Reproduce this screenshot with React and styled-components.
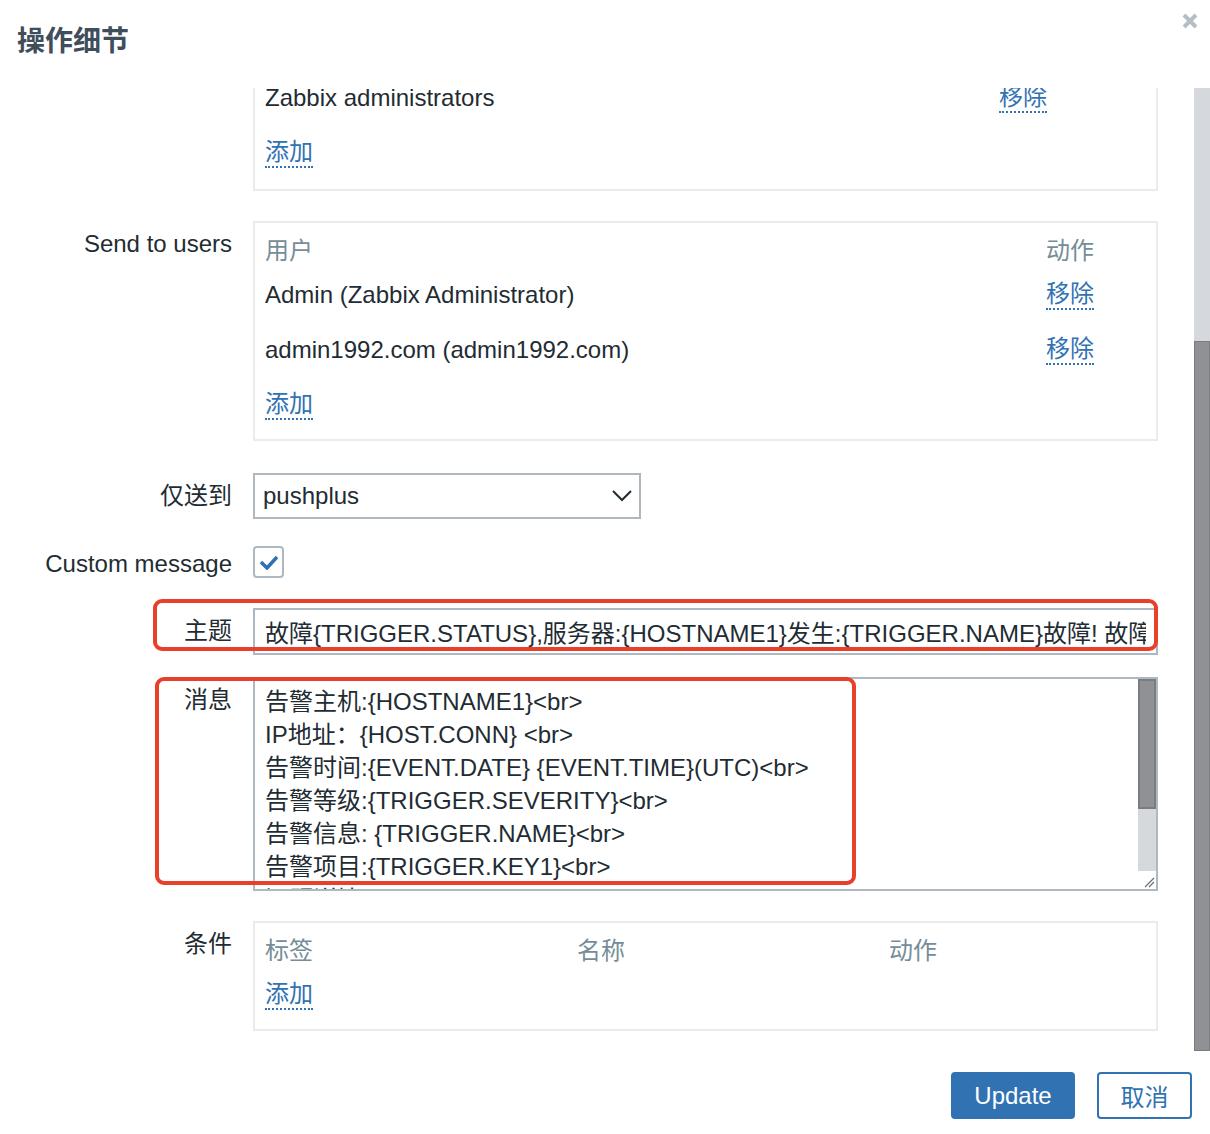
import React, { useLayoutEffect, useRef, useState } from 'react';
import styled, { createGlobalStyle } from 'styled-components';

const FONT = `"Liberation Sans", "Noto Sans CJK SC", sans-serif`;
const TEXT = '#1f2c33';
const BLUE = '#3172b2';
const FIELD_BORDER = '#aeb8c0';

const GlobalStyle = createGlobalStyle`
  html, body {
    margin: 0;
    padding: 0;
    background: #fff;
  }
  body {
    font-family: ${FONT};
    color: ${TEXT};
  }
  * {
    box-sizing: border-box;
  }
`;

const Dialog = styled.div`
  height: 100vh;
  display: flex;
  flex-direction: column;
  background: #fff;
`;

const Header = styled.div`
  flex: none;
  height: 88px;
  display: flex;
  justify-content: space-between;
  align-items: flex-start;
  padding: 0 12px 0 17px;
`;

const Title = styled.h4`
  margin: 24px 0 0;
  font-size: 28px;
  line-height: 36px;
  font-weight: 700;
  color: #404e5b;
`;

const CloseBtn = styled.button`
  margin-top: 13px;
  padding: 0;
  border: none;
  background: none;
  width: 16px;
  height: 16px;
  cursor: pointer;
  svg {
    display: block;
  }
`;

const Body = styled.div`
  flex: 1;
  min-height: 0;
  display: flex;
`;

const Viewport = styled.div`
  flex: 1;
  min-width: 0;
  overflow: hidden;
`;

/* scrollbars are drawn by hand, the headless browser hides native ones */
const Rail = styled.div`
  flex: none;
  width: ${(p) => p.$w}px;
  display: flex;
  flex-direction: column;
`;

const Track = styled.div`
  position: relative;
  flex: 1;
  background: #d5d9dd;
`;

const Thumb = styled.div`
  position: absolute;
  left: 0;
  right: 0;
  background: #8f9194;
  border: ${(p) => p.$bw}px solid #7a7c7f;
`;

const Resizer = styled.div`
  flex: none;
  height: 18px;
  background: #fff;
  svg {
    display: block;
  }
`;

const Form = styled.div`
  padding: 76px 0 20px;
`;

const Row = styled.div`
  position: relative;
  display: grid;
  grid-template-columns: 232px 905px;
  column-gap: 21px;
  align-items: start;
  margin-bottom: ${(p) => (p.$mb === undefined ? 22 : p.$mb)}px;
`;

const Label = styled.label`
  text-align: right;
  font-size: 24px;
  line-height: 46px;
  white-space: nowrap;
  color: ${TEXT};
`;

const Inline = styled.div`
  display: flex;
  align-items: center;
  gap: 12px;
  font-size: 24px;
  height: 46px;
`;

const Hint = styled.span`
  color: #768d99;
  font-size: 22px;
`;

const TextInput = styled.input`
  width: ${(p) => p.$w || '100%'};
  height: ${(p) => p.$h || 46}px;
  border: 2px solid ${FIELD_BORDER};
  padding: 0 10px;
  font-family: ${FONT};
  font-size: 24px;
  color: ${TEXT};
  background: #fff;
  outline: none;
`;

const SelectBox = styled.div`
  width: 388px;
  height: 46px;
  border: 2px solid ${FIELD_BORDER};
  display: flex;
  align-items: center;
  justify-content: space-between;
  padding: 0 6px 0 8px;
  font-size: 24px;
  cursor: pointer;
`;

const Checkbox = styled.span`
  margin-top: 5px;
  width: 31px;
  height: 32px;
  border: 2px solid ${FIELD_BORDER};
  border-radius: 4px;
  display: flex;
  align-items: center;
  justify-content: center;
`;

const TextAreaBox = styled.div`
  display: flex;
  height: 214px;
  border: 2px solid ${FIELD_BORDER};
  background: #fff;
`;

const TextArea = styled.textarea`
  flex: 1;
  min-width: 0;
  border: none;
  padding: 6px 0 6px 10px;
  font-family: ${FONT};
  font-size: 24px;
  line-height: 33px;
  color: ${TEXT};
  resize: none;
  overflow: hidden;
  outline: none;
`;

const Box = styled.div`
  border: 2px solid #ebebeb;
  padding: 6px 10px ${(p) => p.$pb || 7}px;
`;

const Table = styled.div`
  display: grid;
  grid-template-columns: ${(p) => p.$cols};
  font-size: 24px;
`;

const HeadCell = styled.div`
  height: 38px;
  display: flex;
  align-items: center;
  color: #768d99;
`;

const Cell = styled.div`
  height: 55px;
  display: flex;
  align-items: center;
  grid-column: ${(p) => p.$span || 'auto'};
`;

const Link = styled.span`
  color: ${BLUE};
  line-height: 28px;
  border-bottom: 2px dotted ${BLUE};
  cursor: pointer;
`;

const Highlight = styled.div`
  position: absolute;
  left: ${(p) => p.$x}px;
  top: ${(p) => p.$y}px;
  width: ${(p) => p.$w}px;
  height: ${(p) => p.$h}px;
  border: 4px solid #e8402b;
  border-radius: 9px;
  pointer-events: none;
  z-index: 2;
`;

const Footer = styled.div`
  flex: none;
  height: 83px;
  display: flex;
  justify-content: flex-end;
  align-items: flex-start;
  gap: 22px;
  padding: 21px 18px 0 0;
`;

const Button = styled.button`
  height: 47px;
  width: ${(p) => p.$w}px;
  border-radius: 4px;
  font-family: ${FONT};
  font-size: 24px;
  cursor: pointer;
  border: 2px solid ${BLUE};
  background: ${(p) => (p.$primary ? BLUE : '#fff')};
  color: ${(p) => (p.$primary ? '#fff' : BLUE)};
`;

const MESSAGE = [
  '告警主机:{HOSTNAME1}<br>',
  'IP地址：{HOST.CONN} <br>',
  '告警时间:{EVENT.DATE} {EVENT.TIME}(UTC)<br>',
  '告警等级:{TRIGGER.SEVERITY}<br>',
  '告警信息: {TRIGGER.NAME}<br>',
  '告警项目:{TRIGGER.KEY1}<br>',
  '问题详情:{ITEM.NAME}:{ITEM.VALUE}<br>',
  '当前状态:{TRIGGER.STATUS}:{ITEM.VALUE1}<br>',
  '事件ID:{EVENT.ID}',
].join('\n');

const SUBJECT =
  '故障{TRIGGER.STATUS},服务器:{HOSTNAME1}发生:{TRIGGER.NAME}故障! 故障时间:{EVENT.DATE} {EVENT.TIME}';

const measure = (el) => ({
  top: el.scrollTop / el.scrollHeight,
  size: el.clientHeight / el.scrollHeight,
});

const Scrollbar = ({ width, border, metrics, corner }) => (
  <Rail $w={width}>
    <Track>
      <Thumb
        $bw={border}
        style={{ top: `${metrics.top * 100}%`, height: `${metrics.size * 100}%` }}
      />
    </Track>
    {corner && (
      <Resizer>
        <svg width={width} height="18" viewBox="0 0 18 18">
          <path d="M7 16L16 7M11 16L16 11" stroke="#6b6f73" strokeWidth="1.2" />
        </svg>
      </Resizer>
    )}
  </Rail>
);

const Chevron = () => (
  <svg width="22" height="12" viewBox="0 0 22 12">
    <polyline points="2,1 11,10 20,1" fill="none" stroke={TEXT} strokeWidth="2" />
  </svg>
);

const App = () => {
  const bodyRef = useRef(null);
  const areaRef = useRef(null);
  const [bodyBar, setBodyBar] = useState({ top: 0, size: 1 });
  const [areaBar, setAreaBar] = useState({ top: 0, size: 1 });

  useLayoutEffect(() => {
    const el = bodyRef.current;
    el.scrollTop = el.scrollHeight;
    setBodyBar(measure(el));
    setAreaBar(measure(areaRef.current));
  }, []);

  return (
    <>
      <GlobalStyle />
      <Dialog>
        <Header>
          <Title>操作细节</Title>
          <CloseBtn title="关闭">
            <svg width="16" height="16" viewBox="0 0 16 16">
              <path d="M2 2L14 14M14 2L2 14" stroke="#b5bec5" strokeWidth="4" />
            </svg>
          </CloseBtn>
        </Header>

        <Body>
          <Viewport ref={bodyRef}>
            <Form>
              <Row>
                <Label>操作</Label>
                <SelectBox>
                  发送消息
                  <Chevron />
                </SelectBox>
              </Row>
              <Row>
                <Label>步骤</Label>
                <Inline>
                  <TextInput $w="80px" defaultValue="1" />
                  -
                  <TextInput $w="80px" defaultValue="1" />
                  <Hint>(0 - 无穷大)</Hint>
                </Inline>
              </Row>
              <Row>
                <Label>步骤持续时间</Label>
                <Inline>
                  <TextInput $w="140px" defaultValue="0" />
                  <Hint>(0 - use action default)</Hint>
                </Inline>
              </Row>

              <Row $mb={30}>
                <Label>Send to user groups</Label>
                <Box $pb={9}>
                  <Table $cols="734px 1fr">
                    <HeadCell>用户群组</HeadCell>
                    <HeadCell>动作</HeadCell>
                    <Cell>Zabbix administrators</Cell>
                    <Cell>
                      <Link>移除</Link>
                    </Cell>
                    <Cell $span="1 / -1">
                      <Link>添加</Link>
                    </Cell>
                  </Table>
                </Box>
              </Row>

              <Row $mb={32}>
                <Label>Send to users</Label>
                <Box>
                  <Table $cols="781px 1fr">
                    <HeadCell>用户</HeadCell>
                    <HeadCell>动作</HeadCell>
                    <Cell>Admin (Zabbix Administrator)</Cell>
                    <Cell>
                      <Link>移除</Link>
                    </Cell>
                    <Cell>admin1992.com (admin1992.com)</Cell>
                    <Cell>
                      <Link>移除</Link>
                    </Cell>
                    <Cell $span="1 / -1">
                      <Link>添加</Link>
                    </Cell>
                  </Table>
                </Box>
              </Row>

              <Row>
                <Label>仅送到</Label>
                <SelectBox>
                  pushplus
                  <Chevron />
                </SelectBox>
              </Row>

              <Row $mb={21}>
                <Label>Custom message</Label>
                <Checkbox>
                  <svg width="20" height="15" viewBox="0 0 20 15">
                    <polyline points="2,7 8,13 18,2" fill="none" stroke="#2f70b0" strokeWidth="3.5" />
                  </svg>
                </Checkbox>
              </Row>

              <Row>
                <Label>主题</Label>
                <TextInput $h={47} defaultValue={SUBJECT} />
                <Highlight $x={153} $y={-9} $w={1005} $h={52} />
              </Row>

              <Row $mb={30}>
                <Label>消息</Label>
                <TextAreaBox>
                  <TextArea ref={areaRef} defaultValue={MESSAGE} />
                  <Scrollbar width={18} border={2} metrics={areaBar} corner />
                </TextAreaBox>
                <Highlight $x={155} $y={0} $w={701} $h={208} />
              </Row>

              <Row $mb={0}>
                <Label>条件</Label>
                <Box>
                  <Table $cols="312px 312px 1fr">
                    <HeadCell>标签</HeadCell>
                    <HeadCell>名称</HeadCell>
                    <HeadCell>动作</HeadCell>
                    <Cell $span="1 / -1">
                      <Link>添加</Link>
                    </Cell>
                  </Table>
                </Box>
              </Row>
            </Form>
          </Viewport>
          <Scrollbar width={16} border={1} metrics={bodyBar} />
        </Body>

        <Footer>
          <Button $primary $w={124}>
            Update
          </Button>
          <Button $w={95}>取消</Button>
        </Footer>
      </Dialog>
    </>
  );
};

export default App;
